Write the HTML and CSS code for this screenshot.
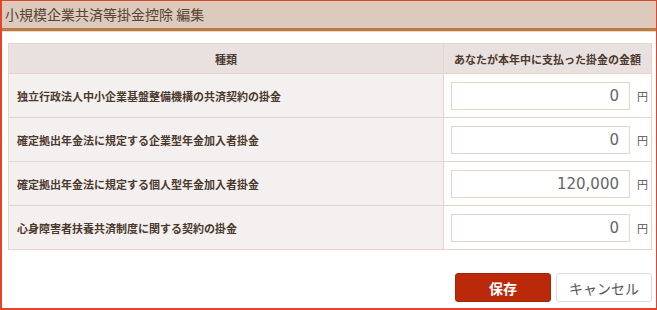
FILE: index.html
```html
<!DOCTYPE html>
<html lang="ja">
<head>
<meta charset="UTF-8">
<title>小規模企業共済等掛金控除 編集</title>
<link rel="stylesheet" href="styles.css">
</head>
<body>

<div class="dialog">
  <div class="dialog-header">小規模企業共済等掛金控除 編集</div>

  <form class="dialog-body">
    <table class="deduction-table">
      <thead>
        <tr>
          <th class="col-kind">種類</th>
          <th class="col-amount">あなたが本年中に支払った掛金の金額</th>
        </tr>
      </thead>
      <tbody>
        <tr>
          <td class="kind">独立行政法人中小企業基盤整備機構の共済契約の掛金</td>
          <td class="amount"><input type="text" value="0"><span class="unit">円</span></td>
        </tr>
        <tr>
          <td class="kind">確定拠出年金法に規定する企業型年金加入者掛金</td>
          <td class="amount"><input type="text" value="0"><span class="unit">円</span></td>
        </tr>
        <tr>
          <td class="kind">確定拠出年金法に規定する個人型年金加入者掛金</td>
          <td class="amount"><input type="text" value="120,000"><span class="unit">円</span></td>
        </tr>
        <tr>
          <td class="kind">心身障害者扶養共済制度に関する契約の掛金</td>
          <td class="amount"><input type="text" value="0"><span class="unit">円</span></td>
        </tr>
      </tbody>
    </table>

    <div class="buttons">
      <button type="button" class="btn btn-save">保存</button>
      <button type="button" class="btn btn-cancel">キャンセル</button>
    </div>
  </form>
</div>

</body>
</html>
```

FILE: styles.css
```css
body {
  margin: 0;
  padding: 0;
  background: #fff;
  font-family: "Noto Sans CJK JP", "Noto Sans", sans-serif;
}

.dialog {
  box-sizing: border-box;
  width: 657px;
  height: 310px;
  border: 2px solid #e4432c;
  border-top-width: 1px;
  border-right-width: 1px;
  background: #fff;
}

.dialog-header {
  height: 27px;
  line-height: 26px;
  padding-left: 3px;
  font-size: 14px;
  color: #5b4434;
  background: #dccabd;
  border-bottom: 3px solid #ba7b45;
  box-shadow: 0 1px 0 #e9d9cc;
}

.dialog-body {
  margin: 0;
  padding: 12px 0 0 6px;
}

.deduction-table {
  width: 644px;
  border-collapse: collapse;
  font-size: 11px;
  color: #4b3a2e;
}

.deduction-table th,
.deduction-table td {
  border: 1px solid #e6d5c8;
}

.deduction-table th {
  height: 29px;
  padding: 0;
  background: #e9e1df;
  font-weight: bold;
}

.col-kind {
  width: 434px;
}

.deduction-table td {
  height: 43px;
  padding: 0;
}

.kind {
  padding-left: 8px !important;
  background: #f5f0f0;
  font-weight: bold;
}

.amount {
  padding-left: 7px !important;
  background: #fff;
}

.amount input {
  box-sizing: border-box;
  width: 179px;
  height: 28px;
  padding: 0 10px;
  border: 1px solid #e6d5c8;
  text-align: right;
  font-family: "DejaVu Sans", sans-serif;
  font-size: 15px;
  color: #666;
  vertical-align: middle;
}

.unit {
  margin-left: 7px;
  font-size: 11px;
  color: #555;
  vertical-align: middle;
}

.buttons {
  display: flex;
  justify-content: flex-end;
  gap: 5px;
  width: 644px;
  margin-top: 23px;
}

.btn {
  box-sizing: border-box;
  width: 96px;
  height: 29px;
  border-radius: 3px;
  font-family: "Noto Sans CJK JP", sans-serif;
  font-size: 14px;
  cursor: pointer;
}

.btn-save {
  border: 1px solid #a82308;
  background: #b9290a;
  color: #fff;
  font-weight: bold;
}

.btn-cancel {
  border: 1px solid #dcdcdc;
  background: #fff;
  color: #555;
}
```
